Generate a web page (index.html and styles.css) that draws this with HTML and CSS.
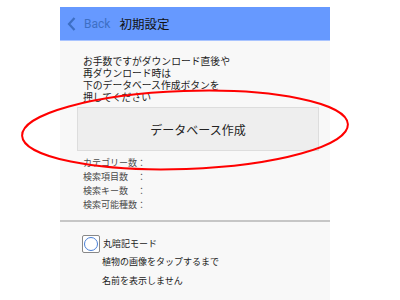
FILE: index.html
```html
<!DOCTYPE html>
<html lang="ja">
<head>
<meta charset="utf-8">
<link rel="stylesheet" href="styles.css">
</head>
<body>
<div class="screen">
  <header class="bar">
    <svg class="chev" width="9" height="14" viewBox="0 0 9 14"><path d="M7.5 1 L2 7 L7.5 13" fill="none" stroke="#3d6fc4" stroke-width="2.2"/></svg>
    <span class="back">Back</span>
    <span class="title">初期設定</span>
  </header>
  <div class="content">
    <p class="desc">お手数ですがダウンロード直後や<br>再ダウンロード時は<br>下のデータベース作成ボタンを<br>押してください</p>
    <div class="btn">データベース作成</div>
    <div class="stats">
      <div class="row"><span class="lbl">カテゴリー数</span><span>：</span></div>
      <div class="row"><span class="lbl">検索項目数</span><span>：</span></div>
      <div class="row"><span class="lbl">検索キー数</span><span>：</span></div>
      <div class="row"><span class="lbl">検索可能種数</span><span>：</span></div>
    </div>
  </div>
  <div class="opts">
    <div class="check">
      <span class="box"><span class="ring"></span></span>
      <span>丸暗記モード</span>
    </div>
    <div class="sub">植物の画像をタップするまで</div>
    <div class="sub">名前を表示しません</div>
  </div>
</div>
<svg class="mark" width="400" height="300" viewBox="0 0 400 300">
  <ellipse cx="185" cy="130" rx="163" ry="39" transform="rotate(-2 185 130)" fill="none" stroke="#ff0000" stroke-width="2"/>
</svg>
</body>
</html>
```
FILE: styles.css
```css
html, body {
  margin: 0;
  padding: 0;
  background: #ffffff;
  font-family: "Liberation Sans", "Noto Sans CJK JP", sans-serif;
  overflow: hidden;
}
.screen {
  margin: 7px 0 0 60px;
  width: 270px;
  height: 293px;
  background: #f8f8f8;
}
.bar {
  height: 33px;
  background: #6699ff;
  border-bottom: 1px solid #a9c4ff;
  display: flex;
  align-items: center;
  box-sizing: content-box;
}
.chev {
  margin-left: 7px;
  margin-top: 1px;
}
.back {
  font-family: Roboto, "Liberation Sans", sans-serif;
  font-size: 12px;
  color: #3d6fc4;
  margin-left: 8px;
}
.title {
  font-size: 12.5px;
  color: #111;
  margin-left: 9px;
}
.content {
  padding: 15px 11px 0 17px;
}
.desc {
  margin: 0 0 3px 6px;
  font-size: 9.8px;
  line-height: 12px;
  color: #222;
}
.btn {
  height: 42px;
  background: #eeeeee;
  border: 1px solid #dddddd;
  display: flex;
  align-items: center;
  justify-content: center;
  font-size: 12px;
  color: #222;
}
.stats {
  margin: 5px 0 0 6px;
  font-size: 9px;
  line-height: 14px;
  color: #4a4a4a;
}
.row {
  display: flex;
}
.lbl {
  width: 54px;
}
.opts {
  margin-top: 8px;
  border-top: 2px solid #c6c6c6;
  padding: 13px 0 0 22px;
  font-size: 9px;
  color: #222;
}
.check {
  display: flex;
  align-items: center;
  height: 18px;
  line-height: 18px;
}
.box {
  width: 16px;
  height: 16px;
  border: 1px solid #888;
  border-radius: 2px;
  background: #fff;
  margin-right: 3px;
  display: flex;
  align-items: center;
  justify-content: center;
}
.ring {
  width: 14px;
  height: 14px;
  border: 1px solid #4a7fd6;
  border-radius: 50%;
  box-sizing: border-box;
}
.sub {
  padding-left: 20px;
  line-height: 19px;
}
.mark {
  position: absolute;
  left: 0;
  top: 0;
  pointer-events: none;
}
```
